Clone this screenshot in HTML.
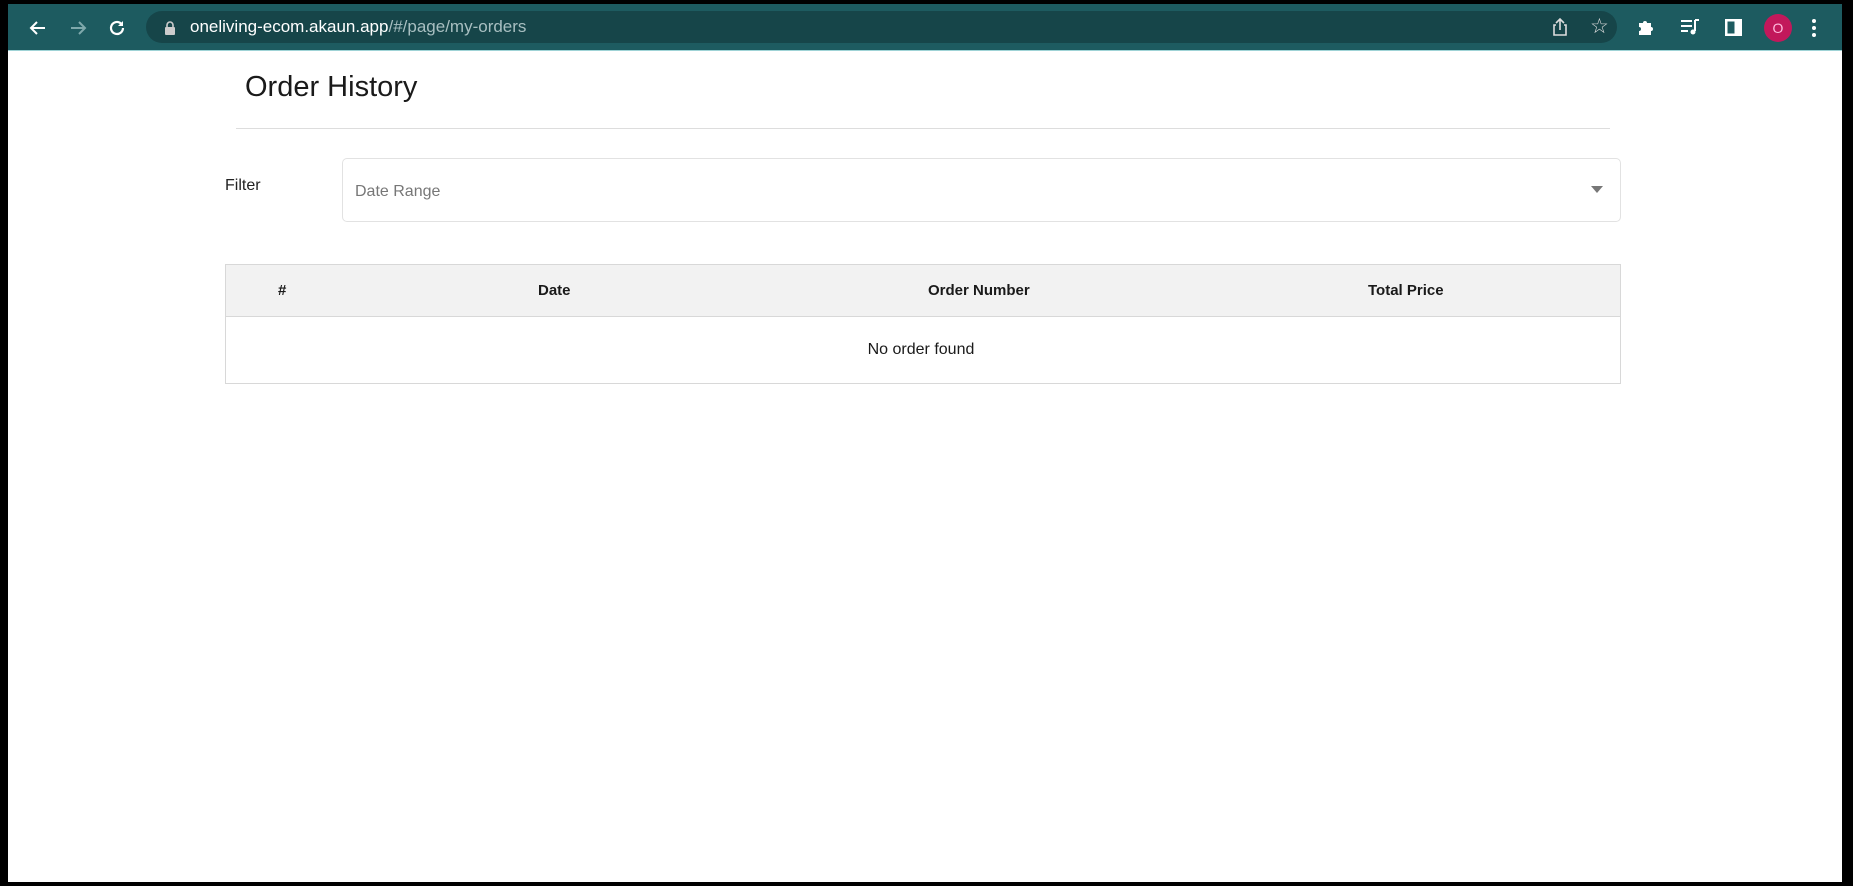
<!DOCTYPE html>
<html><head><meta charset="utf-8"><style>
*{margin:0;padding:0;box-sizing:border-box}
body{width:1853px;height:886px;background:#000;font-family:"Liberation Sans",sans-serif;position:relative;overflow:hidden}
#win{position:absolute;left:8px;top:4px;width:1834px;height:878px;background:#fff}
#bar{position:absolute;left:0;top:0;width:1834px;height:47px;background:#1d5b60;border-bottom:1px solid #9fd3d6}
#url{position:absolute;left:138px;top:7px;width:1471px;height:32px;border-radius:16px;background:#164549}
.ab{position:absolute;color:#fff;font-size:16px}
.t{position:absolute;color:#222}
</style></head><body>
<div id="win">
<div id="bar">
 <div id="url"></div>
 <svg style="position:absolute;left:20px;top:14px" width="20" height="20" viewBox="0 0 20 20"><path d="M17 10H4M9 4l-6 6 6 6" stroke="#fff" stroke-width="2" fill="none"/></svg>
 <svg style="position:absolute;left:60px;top:14px" width="20" height="20" viewBox="0 0 20 20"><path d="M3 10h13M11 4l6 6-6 6" stroke="#7fa9ac" stroke-width="2" fill="none"/></svg>
 <svg style="position:absolute;left:99px;top:14px" width="20" height="20" viewBox="0 0 20 20"><path d="M16 10a6 6 0 1 1-2-4.5" stroke="#fff" stroke-width="2.2" fill="none"/><path d="M16 3v5h-5z" fill="#fff"/></svg>
 <svg style="position:absolute;left:156px;top:17px" width="12" height="14" viewBox="0 0 12 14"><rect x="1" y="6" width="10" height="8" rx="1" fill="#ccc"/><path d="M3 6V4a3 3 0 0 1 6 0v2" stroke="#ccc" stroke-width="1.6" fill="none"/></svg>
 <div class="ab" style="left:182px;top:13px;font-size:17px">oneliving-ecom.akaun.app<span style="color:#a8bfc1">/#/page/my-orders</span></div>
 <svg style="position:absolute;left:1543px;top:13px" width="18" height="20" viewBox="0 0 18 20"><path d="M5 8H3v10h12V8h-2M9 13V2M5 6l4-4 4 4" stroke="#ddd" stroke-width="1.6" fill="none"/></svg>
 <div class="ab" style="left:1582px;top:10px;font-size:21px;color:#ddd">☆</div>
 <svg style="position:absolute;left:1629px;top:13px" width="20" height="20" viewBox="0 0 20 20"><path d="M2 6h4a2 2 0 1 1 4 0h4v4a2 2 0 1 1 0 4v4H2v-4a2 2 0 1 0 0-4z" fill="#fff"/></svg>
 <svg style="position:absolute;left:1672px;top:14px" width="20" height="18" viewBox="0 0 20 18"><path d="M1 3h11M1 8h11M1 13h7M15 2v11" stroke="#fff" stroke-width="2" fill="none"/><circle cx="13" cy="14" r="2.5" fill="#fff"/><path d="M15 2h4" stroke="#fff" stroke-width="2"/></svg>
 <svg style="position:absolute;left:1716px;top:14px" width="19" height="19" viewBox="0 0 19 19"><rect x="1" y="1" width="17" height="17" fill="#fff"/><rect x="3.5" y="3.5" width="7" height="12" fill="#1d5b60"/></svg>
 <div style="position:absolute;left:1756px;top:10px;width:28px;height:28px;border-radius:50%;background:#c2185b;font-size:14px;text-align:center;line-height:28px;color:#fbd">O</div>
 <svg style="position:absolute;left:1803px;top:14px" width="6" height="20" viewBox="0 0 6 20"><circle cx="3" cy="3" r="2" fill="#fff"/><circle cx="3" cy="10" r="2" fill="#fff"/><circle cx="3" cy="17" r="2" fill="#fff"/></svg>
</div>
<div class="t" style="left:237px;top:67px;font-size:29px;color:#1a1a1a">Order History</div>
<div style="position:absolute;left:228px;top:124px;width:1374px;height:1px;background:#ddd"></div>
<div class="t" style="left:217px;top:173px;font-size:16px">Filter</div>
<div style="position:absolute;left:334px;top:154px;width:1279px;height:64px;border:1px solid #e2e2e2;border-radius:5px"></div>
<div class="t" style="left:347px;top:179px;font-size:16px;color:#777">Date Range</div>
<svg style="position:absolute;left:1583px;top:182px" width="12" height="7" viewBox="0 0 12 7"><path d="M0 0h12L6 7z" fill="#777"/></svg>
<div style="position:absolute;left:217px;top:260px;width:1396px;height:120px;border:1px solid #d8d8d8">
 <div style="height:52px;background:#f2f2f2;border-bottom:1px solid #d8d8d8;position:relative;font-weight:bold;font-size:15px;color:#1a1a1a">
  <div style="position:absolute;left:52px;top:17px">#</div>
  <div style="position:absolute;left:312px;top:17px">Date</div>
  <div style="position:absolute;left:702px;top:17px">Order Number</div>
  <div style="position:absolute;left:1142px;top:17px">Total Price</div>
 </div>
 <div style="text-align:center;font-size:16px;margin-top:24px;color:#1a1a1a;padding-right:4px">No order found</div>
</div>
</div>
</body></html>
